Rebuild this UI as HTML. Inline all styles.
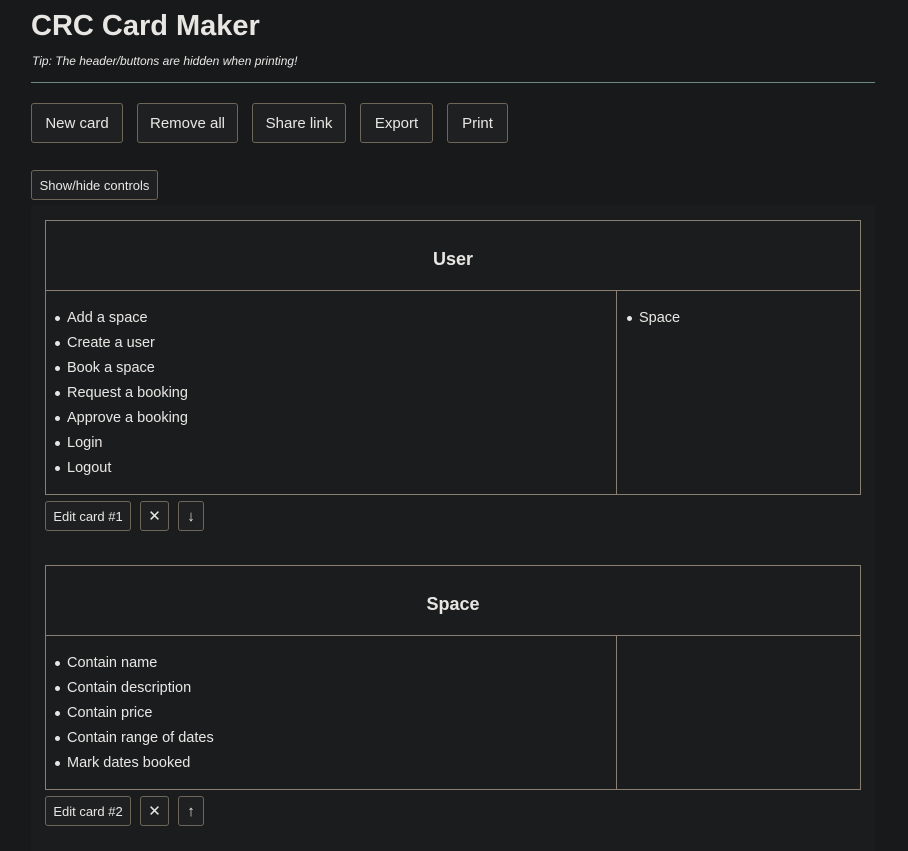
<!DOCTYPE html>
<html><head><meta charset="utf-8"><style>
*{box-sizing:border-box}
body{margin:0;background:#18191b;color:#e8e6e3;font-family:"Liberation Sans","DejaVu Sans",sans-serif;width:908px;height:851px;overflow:hidden;position:relative}
h1{position:absolute;left:31px;top:10px;margin:0;font-size:29px;font-weight:bold;color:#e8e6e3}
.tip{position:absolute;left:32px;top:54px;font-size:12px;font-style:italic}
hr{position:absolute;left:31px;top:82px;width:844px;margin:0;border:0;border-top:1px solid #6c8a80}
.btn{position:absolute;background:#1f2022;border:1px solid #6e6658;border-radius:3px;color:#e8e6e3;font-size:15px;display:flex;align-items:center;justify-content:center}
.sm{font-size:13px}
.panel{position:absolute;left:31px;top:205px;width:844px;height:646px;background:#1b1c1e}
.card{position:absolute;left:45px;width:816px;border:1px solid #8a7f70;background:#1b1c1e}
.card .t{height:70px;border-bottom:1px solid #8a7f70;display:flex;align-items:center;justify-content:center;font-weight:bold;font-size:18px;padding-top:8px}
.card .l{position:absolute;left:0;top:70px;bottom:0;width:571px;border-right:1px solid #8a7f70}
ul{margin:0;padding:19px 0 0 21px;font-size:14.5px;list-style:none}
li{height:25px;position:relative}
li:before{content:"";position:absolute;left:-12px;top:6px;width:5px;height:5px;border-radius:50%;background:#e8e6e3}
.r{position:absolute;left:572px;top:70px}
</style></head><body>
<h1>CRC Card Maker</h1>
<div class="tip">Tip: The header/buttons are hidden when printing!</div>
<hr>
<div class="btn" style="left:31px;top:103px;width:92px;height:40px">New card</div>
<div class="btn" style="left:137px;top:103px;width:101px;height:40px">Remove all</div>
<div class="btn" style="left:252px;top:103px;width:94px;height:40px">Share link</div>
<div class="btn" style="left:360px;top:103px;width:73px;height:40px">Export</div>
<div class="btn" style="left:447px;top:103px;width:61px;height:40px">Print</div>
<div class="btn sm" style="left:31px;top:170px;width:127px;height:30px">Show/hide controls</div>
<div class="panel"></div>
<div class="card" style="top:220px;height:275px">
<div class="t">User</div>
<div class="l"><ul><li>Add a space</li><li>Create a user</li><li>Book a space</li><li>Request a booking</li><li>Approve a booking</li><li>Login</li><li>Logout</li></ul></div>
<div class="r"><ul><li>Space</li></ul></div>
</div>
<div class="btn sm" style="left:45px;top:501px;width:86px;height:30px">Edit card #1</div>
<div class="btn" style="left:140px;top:501px;width:29px;height:30px">✕</div>
<div class="btn" style="left:178px;top:501px;width:26px;height:30px">↓</div>
<div class="card" style="top:565px;height:225px">
<div class="t">Space</div>
<div class="l"><ul><li>Contain name</li><li>Contain description</li><li>Contain price</li><li>Contain range of dates</li><li>Mark dates booked</li></ul></div>
</div>
<div class="btn sm" style="left:45px;top:796px;width:86px;height:30px">Edit card #2</div>
<div class="btn" style="left:140px;top:796px;width:29px;height:30px">✕</div>
<div class="btn" style="left:178px;top:796px;width:26px;height:30px">↑</div>
</body></html>
